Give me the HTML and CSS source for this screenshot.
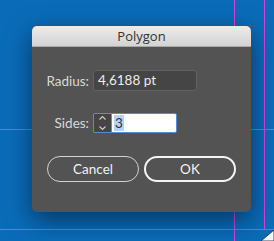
FILE: index.html
```html
<!DOCTYPE html>
<html>
<head>
    <title>Polygon</title>
    <meta charset="utf-8">
    <link rel="stylesheet" href="styles.css">
</head>
<body>
    <div class="canvas">
        <!-- guides -->
        <div class="guide guide-v" style="left: 234px;"></div>
        <div class="guide guide-v guide-short" style="left: 264px;"></div>
        <div class="guide guide-h" style="top: 129px;"></div>
        <div class="guide guide-h" style="top: 229px;"></div>
        <svg class="page-corner" width="14" height="12" viewBox="0 0 14 12">
            <polygon points="1,12 14,1 14,12" fill="#f4f4f4" stroke="#1b2a3a" stroke-width="0.8"/>
        </svg>

        <div class="dialog">
            <div class="title-bar">Polygon</div>

            <div class="row row-radius">
                <label class="field-label">Radius:</label>
                <div class="text-field">4,6188 pt</div>
            </div>

            <div class="row row-sides">
                <label class="field-label">Sides:</label>
                <div class="spin-field">
                    <div class="spinner">
                        <svg width="9" height="18" viewBox="0 0 9 18">
                            <polyline points="1.5,5.5 4.5,2.5 7.5,5.5" fill="none" stroke="#cfcfcf" stroke-width="1.1"/>
                            <polyline points="1.5,12.5 4.5,15.5 7.5,12.5" fill="none" stroke="#cfcfcf" stroke-width="1.1"/>
                        </svg>
                    </div>
                    <div class="spin-value"><span class="selected">3</span></div>
                </div>
            </div>

            <div class="buttons">
                <button class="btn">Cancel</button>
                <button class="btn btn-default">OK</button>
            </div>
        </div>
    </div>
</body>
</html>
```

FILE: styles.css
```css
body {
    margin: 0;
    width: 274px;
    height: 241px;
    overflow: hidden;
    background: #0a6cb8;
    font-family: Lato, "Open Sans", sans-serif;
}

.canvas {
    position: relative;
    width: 274px;
    height: 241px;
    padding: 26px 0 0 32px;
    box-sizing: border-box;
}

/* Magenta guides on the artboard */
.guide {
    position: absolute;
    background: #e03ee4;
}

.guide-v {
    top: 0;
    width: 1px;
    height: 241px;
}

.guide-short {
    height: 230px;
}

.guide-h {
    left: 0;
    width: 274px;
    height: 1px;
}

.page-corner {
    position: absolute;
    right: 0;
    bottom: 0;
}

.dialog {
    position: relative;
    width: 219px;
    height: 186px;
    background: #535353;
    border-radius: 5px;
    box-shadow: 0 8px 26px rgba(0, 10, 30, 0.55);
}

.title-bar {
    height: 21px;
    line-height: 21px;
    text-align: center;
    font-family: "Open Sans", sans-serif;
    font-size: 13px;
    color: #333;
    background: linear-gradient(#ececec, #d3d3d3);
    border-radius: 5px 5px 0 0;
    border-bottom: 1px solid #a8a8a8;
    box-sizing: border-box;
}

.row {
    display: flex;
    align-items: center;
    gap: 4px;
}

.row-radius {
    margin-top: 23px;
}

.row-sides {
    margin-top: 22px;
}

.field-label {
    width: 57px;
    text-align: right;
    font-size: 13.5px;
    color: #d8d8d8;
}

.text-field {
    width: 104px;
    height: 21px;
    box-sizing: border-box;
    background: #454545;
    border: 1px solid #616161;
    border-radius: 3px;
    padding-left: 4px;
    font-size: 13.5px;
    line-height: 19px;
    color: #ececec;
}

.spin-field {
    display: flex;
    width: 84px;
    height: 20px;
    box-sizing: border-box;
    border: 1px solid #4d8fd8;
    border-radius: 2px;
    background: #fff;
}

.spinner {
    width: 17px;
    background: #454545;
    border-right: 1px solid #4d8fd8;
    display: flex;
    align-items: center;
    justify-content: center;
}

.spinner svg {
    display: block;
}

.spin-value {
    padding-left: 2px;
    font-size: 13.5px;
    line-height: 18px;
    color: #333;
}

.selected {
    background: #b3d4fc;
    padding: 0 1px;
}

.buttons {
    display: flex;
    gap: 5px;
    margin: 23px 0 0 15px;
}

.btn {
    width: 92px;
    height: 26px;
    box-sizing: border-box;
    background: transparent;
    border: 1px solid #d2d2d2;
    border-radius: 13px;
    font-family: Lato, sans-serif;
    font-size: 13.5px;
    color: #f2f2f2;
    padding: 0;
}

.btn-default {
    border: 2px solid #f4f4f4;
}
```
